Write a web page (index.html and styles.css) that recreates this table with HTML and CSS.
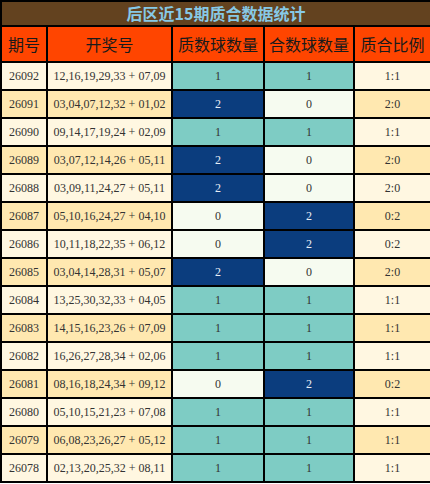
FILE: index.html
```html
<!DOCTYPE html>
<html lang="zh-CN">
  <head>
    <meta charset="UTF-8" />
    <title>后区近15期质合数据统计</title>
    <link rel="stylesheet" href="styles.css">
  </head>
  <body>
    <table class="stats">
      <colgroup>
        <col class="c-issue" />
        <col class="c-draw" />
        <col class="c-prime" />
        <col class="c-comp" />
        <col class="c-ratio" />
      </colgroup>
      <thead>
        <tr class="title-row">
          <th colspan="5">后区近15期质合数据统计</th>
        </tr>
        <tr class="head-row">
          <th>期号</th>
          <th>开奖号</th>
          <th>质数球数量</th>
          <th>合数球数量</th>
          <th>质合比例</th>
        </tr>
      </thead>
      <tbody id="rows"></tbody>
    </table>

    <script>
      const data = [
        ["26092", "12,16,19,29,33 + 07,09", 1, 1],
        ["26091", "03,04,07,12,32 + 01,02", 2, 0],
        ["26090", "09,14,17,19,24 + 02,09", 1, 1],
        ["26089", "03,07,12,14,26 + 05,11", 2, 0],
        ["26088", "03,09,11,24,27 + 05,11", 2, 0],
        ["26087", "05,10,16,24,27 + 04,10", 0, 2],
        ["26086", "10,11,18,22,35 + 06,12", 0, 2],
        ["26085", "03,04,14,28,31 + 05,07", 2, 0],
        ["26084", "13,25,30,32,33 + 04,05", 1, 1],
        ["26083", "14,15,16,23,26 + 07,09", 1, 1],
        ["26082", "16,26,27,28,34 + 02,06", 1, 1],
        ["26081", "08,16,18,24,34 + 09,12", 0, 2],
        ["26080", "05,10,15,21,23 + 07,08", 1, 1],
        ["26079", "06,08,23,26,27 + 05,12", 1, 1],
        ["26078", "02,13,20,25,32 + 08,11", 1, 1],
      ];

      // colour a count cell by its value
      function countClass(n) {
        if (n === 2) return "n-two";
        if (n === 1) return "n-one";
        return "n-zero";
      }

      const tbody = document.getElementById("rows");
      data.forEach((row, i) => {
        const tr = document.createElement("tr");
        tr.className = i % 2 === 0 ? "odd" : "even";
        tr.innerHTML =
          `<td>${row[0]}</td>` +
          `<td>${row[1]}</td>` +
          `<td class="${countClass(row[2])}">${row[2]}</td>` +
          `<td class="${countClass(row[3])}">${row[3]}</td>` +
          `<td>${row[2]}:${row[3]}</td>`;
        tbody.appendChild(tr);
      });
    </script>
  </body>
</html>
```

FILE: styles.css
```css
body {
  margin: 0;
  background-color: #fff;
}
.stats {
  width: 430px;
  border-collapse: collapse;
  table-layout: fixed;
  font-family: "Liberation Serif", "Noto Sans CJK SC", serif;
  color: #333;
}
.c-issue { width: 46px; }
.c-draw { width: 125px; }
.c-prime { width: 92px; }
.c-comp { width: 90px; }
.c-ratio { width: 77px; }

.stats th,
.stats td {
  border: 2px solid #000;
  padding: 0;
  text-align: center;
}
.title-row th {
  height: 23px;
  background-color: #63421f;
  color: #87c9e6;
  font-family: "Noto Sans CJK SC", sans-serif;
  font-size: 16px;
  font-weight: bold;
  line-height: 23px;
}
.head-row th {
  height: 34px;
  background-color: #ff4500;
  color: #1a1a1a;
  font-family: "Noto Sans CJK SC", sans-serif;
  font-size: 16px;
  font-weight: normal;
}
.stats td {
  height: 26px;
  font-size: 12px;
}
tr.odd td { background-color: #fff7e1; }
tr.even td { background-color: #ffe8b0; }

.stats td.n-one { background-color: #7eccc4; }
.stats td.n-two { background-color: #0b3d7e; color: #e8eef5; }
.stats td.n-zero { background-color: #f6fbf0; }
```
